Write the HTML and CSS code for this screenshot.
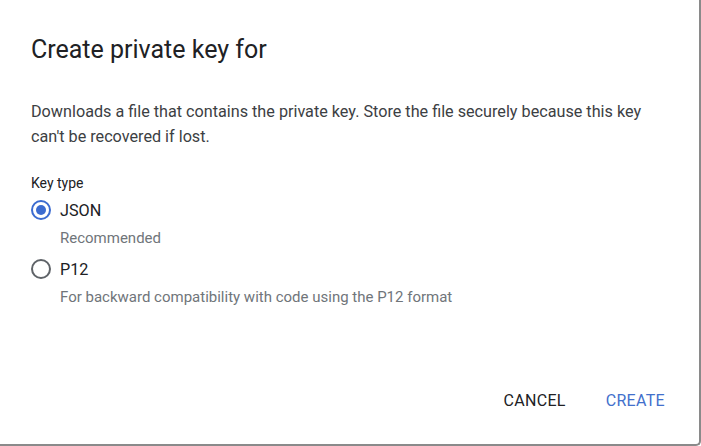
FILE: index.html
```html
<!DOCTYPE html>
<html>
<head>
<meta charset="utf-8">
<link rel="stylesheet" href="styles.css">
</head>
<body>
<div class="dialog">
  <h1 class="title">Create private key for</h1>
  <p class="desc">Downloads a file that contains the private key. Store the file securely because this key can't be recovered if lost.</p>
  <div class="group">
    <div class="group-label">Key type</div>
    <label class="option first">
      <span class="radio checked"></span>
      <span class="opt-label">JSON</span>
    </label>
    <div class="hint">Recommended</div>
    <label class="option second">
      <span class="radio"></span>
      <span class="opt-label">P12</span>
    </label>
    <div class="hint">For backward compatibility with code using the P12 format</div>
  </div>
  <div class="actions">
    <button class="btn">CANCEL</button>
    <button class="btn primary">CREATE</button>
  </div>
</div>
</body>
</html>
```
FILE: styles.css
```css
html, body {
  margin: 0;
  padding: 0;
  background: #ffffff;
}
body {
  width: 701px;
  height: 446px;
  font-family: Roboto, "Liberation Sans", sans-serif;
  color: #202124;
}
.dialog {
  box-sizing: border-box;
  width: 701px;
  height: 446px;
  background: #fff;
  border-right: 2px solid #8a8a8a;
  border-bottom: 2px solid #8a8a8a;
  border-bottom-right-radius: 5px;
  display: flex;
  flex-direction: column;
  padding: 0 0 0 31px;
}
.title {
  margin: 35px 0 0 0;
  font-size: 25px;
  font-weight: 400;
  line-height: 30px;
  color: #202124;
}
.desc {
  margin: 34px 0 0 0;
  width: 640px;
  font-size: 16.2px;
  line-height: 25px;
  color: #3c4043;
}
.group {
  margin-top: 25px;
  display: flex;
  flex-direction: column;
}
.group-label {
  font-size: 14px;
  font-weight: 400;
  line-height: 18px;
  color: #202124;
}
.option {
  display: flex;
  align-items: center;
  height: 26px;
  margin-top: 5px;
}
.option.second {
  margin-top: 8px;
}
.radio {
  box-sizing: border-box;
  width: 20px;
  height: 20px;
  border-radius: 50%;
  border: 2px solid #5f6368;
  margin-right: 9px;
  display: flex;
  align-items: center;
  justify-content: center;
}
.radio.checked {
  border-color: #3b6bd0;
}
.radio.checked::after {
  content: "";
  width: 10px;
  height: 10px;
  border-radius: 50%;
  background: #3b6bd0;
}
.opt-label {
  font-size: 16.2px;
  color: #202124;
}
.hint {
  margin-left: 29px;
  font-size: 15px;
  line-height: 20px;
  color: #70757a;
  margin-top: 5px;
}
.actions {
  margin-top: auto;
  margin-bottom: 29px;
  display: flex;
  justify-content: flex-end;
  gap: 24px;
  padding-right: 26px;
}
.btn {
  font-family: Roboto, "Liberation Sans", sans-serif;
  font-size: 16px;
  font-weight: 400;
  letter-spacing: 0.3px;
  background: none;
  border: none;
  padding: 5px 8px;
  color: #202124;
}
.btn.primary {
  color: #4270cc;
}
```
